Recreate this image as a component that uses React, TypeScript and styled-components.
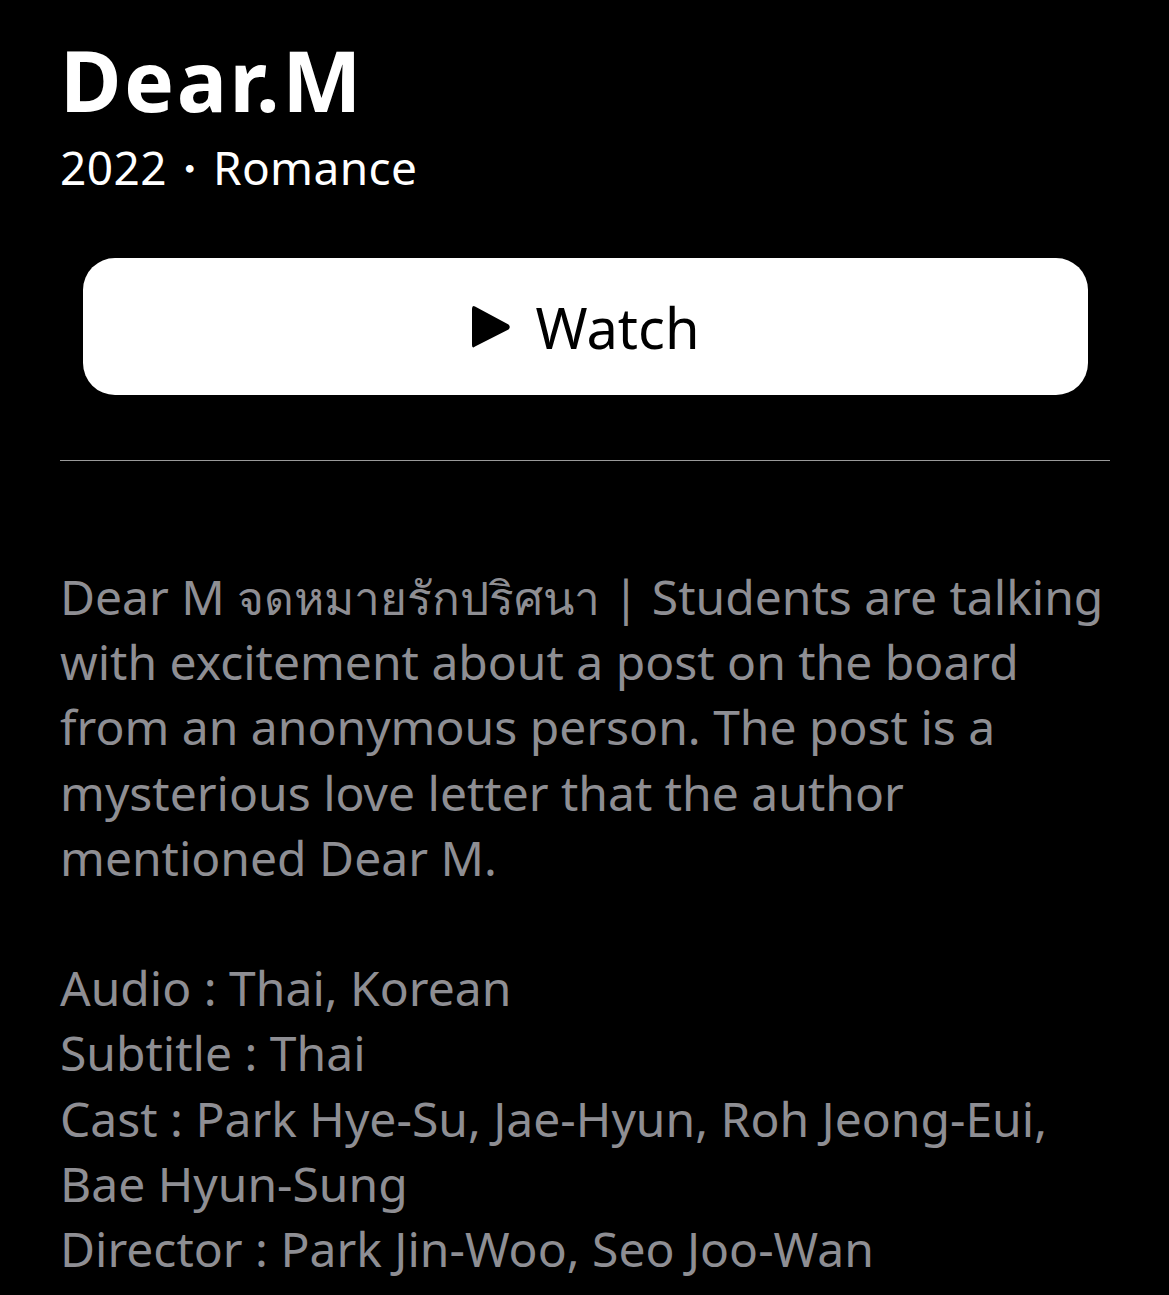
import React from "react";
import styled, { createGlobalStyle } from "styled-components";

const Global = createGlobalStyle`
  html, body { margin: 0; padding: 0; background: #000; }
  body { font-family: "Noto Sans", "Open Sans", sans-serif; }
`;

const Page = styled.main`
  background: #000;
  min-height: 1295px;
  padding: 30px 59px 0 60px;
  box-sizing: border-box;
  display: flex;
  flex-direction: column;
`;

const Title = styled.h1`
  margin: 0;
  font-size: 84px;
  font-weight: 700;
  line-height: 100px;
  letter-spacing: 2.5px;
  color: #fff;
`;

const Meta = styled.div`
  font-size: 46px;
  line-height: 62px;
  letter-spacing: 0.4px;
  color: #fff;
  margin-top: 6px;
`;

const Dot = styled.span`
  font-family: "Noto Sans CJK JP", sans-serif;
  font-size: 36px;
  letter-spacing: 0;
  line-height: 0;
  margin: 0 5px;
  vertical-align: 2px;
`;

const WatchButton = styled.button`
  margin: 60px 22px 0 23px;
  height: 137px;
  border: none;
  border-radius: 32px;
  background: #fff;
  display: flex;
  align-items: center;
  justify-content: center;
  gap: 24px;
  font-family: "Noto Sans", sans-serif;
  font-size: 56px;
  color: #000;
  cursor: pointer;
`;

const Divider = styled.hr`
  margin: 65px 0 0 0;
  border: none;
  border-top: 1px solid #9a9a9a;
`;

const Description = styled.p`
  margin: 103px 0 0 0;
  font-size: 48px;
  line-height: 65.2px;
  color: #8e8e93;
  white-space: pre-wrap;
`;

const Thai = styled.span`
  font-size: 46px;
  line-height: 0;
`;

const PlayIcon = () => (
  <svg width="40" height="44" viewBox="0 0 40 44">
    <path d="M4 1.5 Q1 0 1 4 L1 40 Q1 44 4 41.5 L37.5 24.5 Q40 22 37.5 19.5 Z" fill="#000" />
  </svg>
);

export default function App() {
  return (
    <>
      <Global />
      <Page>
        <Title>Dear.M</Title>
        <Meta>
          2022<Dot>・</Dot>Romance
        </Meta>
        <WatchButton>
          <PlayIcon />
          <span>Watch</span>
        </WatchButton>
        <Divider />
        <Description>
          {"Dear M "}
          <Thai>จดหมายรักปริศนา</Thai>
          {" | Students are talking with excitement about a post on the board from an anonymous person. The post is a mysterious love letter that the author mentioned Dear M.\n\nAudio : Thai, Korean\nSubtitle : Thai\nCast : Park Hye-Su, Jae-Hyun, Roh Jeong-Eui, Bae Hyun-Sung\nDirector : Park Jin-Woo, Seo Joo-Wan"}
        </Description>
      </Page>
    </>
  );
}
